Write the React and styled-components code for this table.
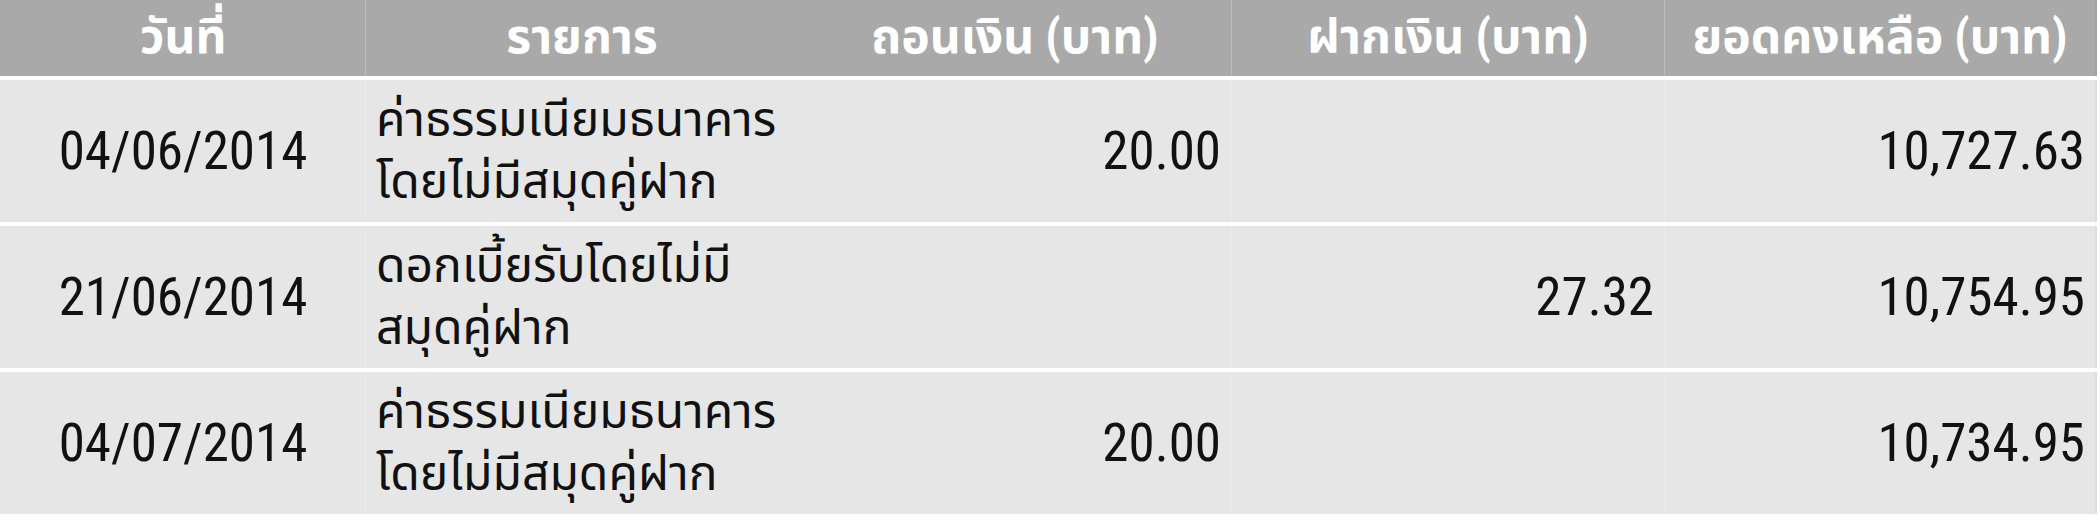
import React from "react";
import styled, { createGlobalStyle } from "styled-components";

const GlobalStyle = createGlobalStyle`
  html, body {
    margin: 0;
    padding: 0;
    background: #ffffff;
  }
  body {
    font-family: Roboto, "Noto Sans Thai", "Noto Sans", sans-serif;
  }
`;

const COLUMNS = "365px repeat(4, 433px)";
const NUMBER_FONT = `"Roboto Condensed", Roboto, "Noto Sans Thai", sans-serif`;

const statement = [
  {
    date: "04/06/2014",
    detail: "ค่าธรรมเนียมธนาคาร\nโดยไม่มีสมุดคู่ฝาก",
    withdraw: "20.00",
    deposit: "",
    balance: "10,727.63",
  },
  {
    date: "21/06/2014",
    detail: "ดอกเบี้ยรับโดยไม่มี\nสมุดคู่ฝาก",
    withdraw: "",
    deposit: "27.32",
    balance: "10,754.95",
  },
  {
    date: "04/07/2014",
    detail: "ค่าธรรมเนียมธนาคาร\nโดยไม่มีสมุดคู่ฝาก",
    withdraw: "20.00",
    deposit: "",
    balance: "10,734.95",
  },
];

const App = () => {
  return (
    <>
      <GlobalStyle />
      <Table>
        <HeaderRow>
          <HeadCell>วันที่</HeadCell>
          <HeadCell $divider>รายการ</HeadCell>
          <HeadCell>ถอนเงิน (บาท)</HeadCell>
          <HeadCell $divider>ฝากเงิน (บาท)</HeadCell>
          <HeadCell $divider $last>
            ยอดคงเหลือ (บาท)
          </HeadCell>
        </HeaderRow>
        {statement.map((row) => (
          <BodyRow key={row.date}>
            <DateCell>{row.date}</DateCell>
            <DetailCell $divider>{row.detail}</DetailCell>
            <AmountCell>{row.withdraw}</AmountCell>
            <AmountCell $divider>{row.deposit}</AmountCell>
            <AmountCell $divider $last>
              {row.balance}
            </AmountCell>
          </BodyRow>
        ))}
      </Table>
    </>
  );
};

const Table = styled.div`
  display: flex;
  flex-direction: column;
  gap: 4px;
  width: 2097px;
  height: 523px;
`;

const HeaderRow = styled.div`
  display: grid;
  grid-template-columns: ${COLUMNS};
  height: 76px;
  background: #a9a9a9;
`;

const BodyRow = styled.div`
  display: grid;
  grid-template-columns: ${COLUMNS};
  height: 142px;
  background: #e6e6e6;
`;

const Cell = styled.div`
  display: flex;
  align-items: center;
  box-sizing: border-box;
  border-left: 1px solid
    ${(p) => (p.$divider ? "rgba(255, 255, 255, 0.22)" : "transparent")};
  border-right: ${(p) => (p.$last ? "2px solid rgba(0, 0, 0, 0.04)" : "none")};
`;

const HeadCell = styled(Cell)`
  justify-content: center;
  color: #ffffff;
  font-family: ${NUMBER_FONT};
  font-stretch: condensed;
  font-size: 48px;
  font-weight: 700;
  white-space: nowrap;
`;

const DateCell = styled(Cell)`
  justify-content: center;
  color: #111111;
  font-family: ${NUMBER_FONT};
  font-stretch: condensed;
  font-size: 53px;
`;

const DetailCell = styled(Cell)`
  padding-left: 10px;
  color: #111111;
  font-size: 48px;
  line-height: 62px;
  white-space: pre;
`;

const AmountCell = styled(Cell)`
  justify-content: flex-end;
  padding-right: 10px;
  color: #111111;
  font-family: ${NUMBER_FONT};
  font-stretch: condensed;
  font-size: 53px;
`;

export default App;
